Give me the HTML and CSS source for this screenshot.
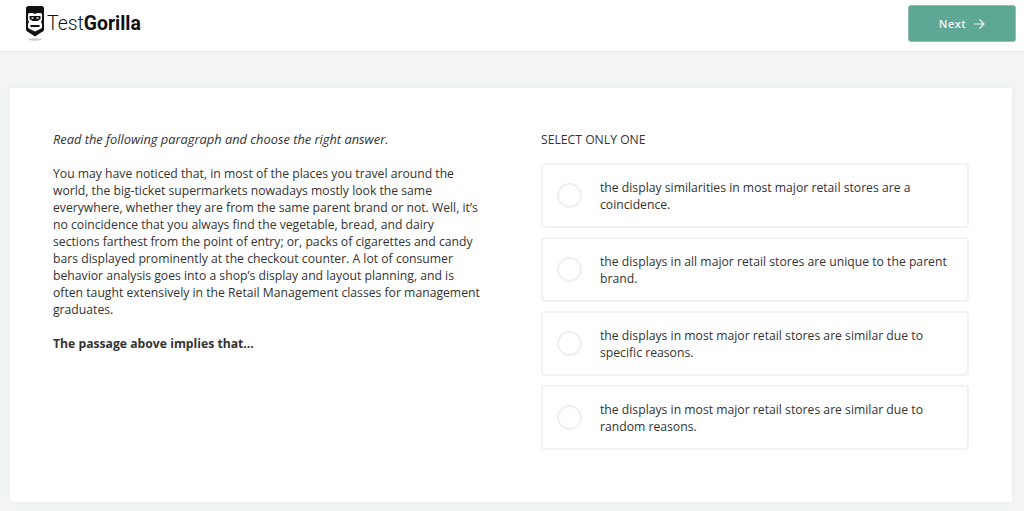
FILE: index.html
```html
<!DOCTYPE html>
<html lang="en">
<head>
<meta charset="utf-8">
<title>TestGorilla</title>
<link rel="stylesheet" href="styles.css">
</head>
<body>
<header class="topbar">
  <div class="logo">
    <svg class="logo-mark" width="20" height="36" viewBox="0 0 20 36" aria-hidden="true">
      <path d="M3.500 1 H16.500 Q19 1 19 3.500 V24.500 Q19 25.500 18 26.200 L10 31.500 L2 26.200 Q1 25.500 1 24.500 V3.500 Q1 1 3.500 1Z" fill="#111"/>
      <path d="M4.500 8 H8 L10 9 L12 8 H15.500 Q17 8 17 9.500 V15 L16 17 L17 19 V22 Q17 23.200 15.800 23.800 L10 26.500 L4.200 23.800 Q3 23.200 3 22 V19 L4 17 L3 15 V9.500 Q3 8 4.500 8Z" fill="#fff"/>
      <path d="M4.500 11 H15.500 V14 L12.500 16 H7.500 L4.500 14Z" fill="#111"/>
      <rect x="6.500" y="12.300" width="2" height="1.500" fill="#fff"/>
      <rect x="11.500" y="12.300" width="2" height="1.500" fill="#fff"/>
      <rect x="5.500" y="20" width="9" height="2" fill="#111"/>
      <ellipse cx="10" cy="34.500" rx="7" ry="1.200" fill="#c9c9c9"/>
    </svg>
    <span class="wordmark">Test<b>Gorilla</b></span>
  </div>
  <button class="next">Next
    <svg width="12" height="12" viewBox="0 0 12 12" aria-hidden="true"><path d="M1 6 H10.500 M6.500 1.500 L11 6 L6.500 10.500" fill="none" stroke="#eef6f3" stroke-width="1.200"/></svg>
  </button>
</header>
<main class="card">
  <section class="passage">
    <p class="lead">Read the following paragraph and choose the right answer.</p>
    <p>You may have noticed that, in most of the places you travel around the world, the big-ticket supermarkets nowadays mostly look the same everywhere, whether they are from the same parent brand or not. Well, it’s no coincidence that you always find the vegetable, bread, and dairy sections farthest from the point of entry; or, packs of cigarettes and candy bars displayed prominently at the checkout counter. A lot of consumer behavior analysis goes into a shop’s display and layout planning, and is often taught extensively in the Retail Management classes for management graduates.</p>
    <p><strong>The passage above implies that...</strong></p>
  </section>
  <section class="answers">
    <h2>SELECT ONLY ONE</h2>
    <div class="option"><span class="radio"></span><span>the display similarities in most major retail stores are a coincidence.</span></div>
    <div class="option"><span class="radio"></span><span>the displays in all major retail stores are unique to the parent brand.</span></div>
    <div class="option"><span class="radio"></span><span>the displays in most major retail stores are similar due to specific reasons.</span></div>
    <div class="option"><span class="radio"></span><span>the displays in most major retail stores are similar due to random reasons.</span></div>
  </section>
</main>
</body>
</html>
```
FILE: styles.css
```css
* { box-sizing: border-box; }
html, body { margin: 0; height: 511px; overflow: hidden; }
body { background: #f3f5f4; font-family: "Open Sans", sans-serif; font-size: 12.200px; line-height: 17px; color: #333; }
.topbar { height: 52px; background: #fff; border-bottom: 1px solid #e9ecea; display: flex; align-items: flex-start; justify-content: space-between; padding: 5px 8px 0 25px; }
.logo { display: flex; align-items: flex-start; gap: 2px; }
.logo-mark { display: block; }
.wordmark { font-family: Roboto, sans-serif; font-weight: 300; font-size: 19.400px; line-height: 38px; color: #111; }
.wordmark b { font-weight: 700; }
.next { width: 108px; height: 37px; background: #5fa795; border: 1px solid #8cc0b2; border-radius: 3px; color: #eef6f3; font: 600 11px "Open Sans", sans-serif; letter-spacing: .5px; display: flex; align-items: center; justify-content: center; gap: 7px; }
.card { margin: 36px 12px 0 10px; height: 414px; background: #fff; border-radius: 3px; box-shadow: 0 0 6px rgba(0,0,0,.04); padding: 43px 43px 0; display: flex; }
.passage { width: 428px; margin-right: 60px; }
.passage p { margin: 0 0 17px; }
.passage .lead { font-style: italic; font-size: 12.840px; }
.answers { flex: 1; }
.answers h2 { margin: 0 0 15px; font-size: 12.200px; line-height: 17px; font-weight: 400; }
.option { height: 65px; margin-bottom: 9px; border: 2px solid #f1f2f1; border-radius: 4px; display: flex; align-items: center; padding: 0 15px 0 14px; gap: 18px; }
.radio { flex: none; width: 25px; height: 25px; border: 2px solid #eeefee; border-radius: 50%; }
```
